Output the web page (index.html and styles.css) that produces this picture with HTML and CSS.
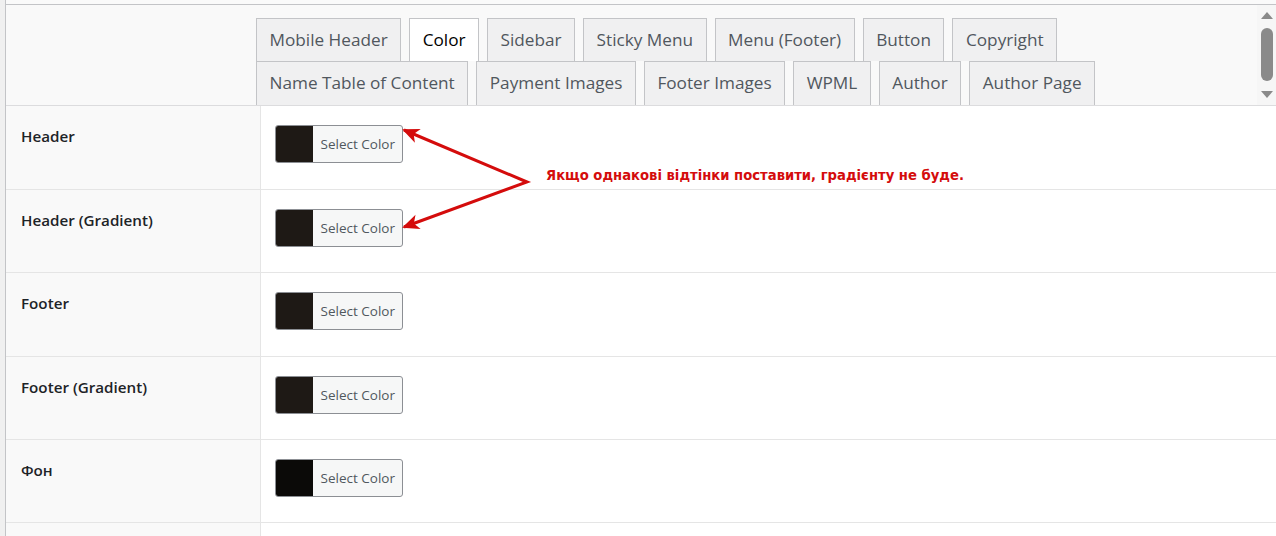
FILE: index.html
```html
<!DOCTYPE html>
<html lang="uk">
<head>
<meta charset="utf-8">
<title>Color settings</title>
<link rel="stylesheet" href="styles.css">
</head>
<body>
<div class="frame">
  <div class="tabs-area">
    <div class="tabs">
      <div class="tab-row">
        <a class="tab">Mobile Header</a>
        <a class="tab active">Color</a>
        <a class="tab">Sidebar</a>
        <a class="tab">Sticky Menu</a>
        <a class="tab">Menu (Footer)</a>
        <a class="tab">Button</a>
        <a class="tab">Copyright</a>
      </div>
      <div class="tab-row">
        <a class="tab">Name Table of Content</a>
        <a class="tab">Payment Images</a>
        <a class="tab">Footer Images</a>
        <a class="tab">WPML</a>
        <a class="tab">Author</a>
        <a class="tab">Author Page</a>
      </div>
    </div>
    <div class="scrollbar">
      <span class="sb-up"></span>
      <span class="sb-thumb"></span>
      <span class="sb-down"></span>
    </div>
  </div>

  <table class="form-table">
    <tr>
      <th>Header</th>
      <td><button class="color-btn"><span class="swatch swatch-brown"></span><span class="btn-label">Select Color</span></button></td>
    </tr>
    <tr>
      <th>Header (Gradient)</th>
      <td><button class="color-btn"><span class="swatch swatch-brown"></span><span class="btn-label">Select Color</span></button></td>
    </tr>
    <tr>
      <th>Footer</th>
      <td><button class="color-btn"><span class="swatch swatch-brown"></span><span class="btn-label">Select Color</span></button></td>
    </tr>
    <tr>
      <th>Footer (Gradient)</th>
      <td><button class="color-btn"><span class="swatch swatch-brown"></span><span class="btn-label">Select Color</span></button></td>
    </tr>
    <tr>
      <th>Фон</th>
      <td><button class="color-btn"><span class="swatch swatch-black"></span><span class="btn-label">Select Color</span></button></td>
    </tr>
    <tr class="last">
      <th></th>
      <td></td>
    </tr>
  </table>

  <svg class="annot" width="1270" height="536" viewBox="0 0 1270 536">
    <defs>
      <marker id="ah" markerUnits="userSpaceOnUse" markerWidth="40" markerHeight="40" refX="19" refY="20" orient="auto-start-reverse" viewBox="0 0 40 40">
        <path d="M21 20 L4 12.5 L8.5 20 L4 27.5 Z" fill="#d40c0c"/>
      </marker>
    </defs>
    <polyline points="398,130 521,182 398,227" fill="none" stroke="#d40c0c" stroke-width="3" stroke-linejoin="miter" marker-start="url(#ah)" marker-end="url(#ah)"/>
  </svg>
  <p class="note">Якщо однакові відтінки поставити, градієнту не буде.</p>
</div>
</body>
</html>
```

FILE: styles.css
```css
html, body {
  margin: 0;
  padding: 0;
}
body {
  background: #f0f0f0;
  font-family: "Open Sans", "Noto Sans", "Liberation Sans", sans-serif;
  width: 1276px;
  height: 536px;
  overflow: hidden;
}
.frame {
  position: relative;
  margin-left: 5px;
  border-left: 1px solid #c3c4c7;
  background: #fafafa;
  padding-top: 4px;
}
.tabs-area {
  display: flex;
  height: 100px;
  border-top: 1px solid #c3c4c7;
  border-bottom: 1px solid #dcdcde;
  background: #f9f9f9;
}
.tabs {
  flex: 1;
  padding: 13px 0 0 250px;
  display: flex;
  flex-direction: column;
}
.tab-row {
  display: flex;
  gap: 8px;
}
.tab {
  box-sizing: border-box;
  height: 43px;
  padding: 0 12.5px;
  border: 1px solid #c3c4c7;
  border-bottom: none;
  background: #f0f0f1;
  color: #50575e;
  font-size: 17.2px;
  line-height: 42px;
  white-space: nowrap;
}
.tab-row + .tab-row .tab {
  height: 44px;
}
.tab.active {
  background: #fff;
  color: #000;
}
.scrollbar {
  width: 19px;
  background: #f6f6f6;
  position: relative;
}
.sb-up, .sb-down {
  position: absolute;
  left: 4px;
  width: 0;
  height: 0;
  border-left: 6px solid transparent;
  border-right: 6px solid transparent;
}
.sb-up {
  top: 7px;
  border-bottom: 7px solid #8a8a8a;
}
.sb-down {
  top: 86px;
  border-top: 7px solid #8a8a8a;
}
.sb-thumb {
  position: absolute;
  left: 4px;
  top: 23px;
  width: 12px;
  height: 53px;
  border-radius: 6px;
  background: #8a8a8a;
}
.form-table {
  width: 100%;
  border-collapse: collapse;
  background: #fff;
}
.form-table tr {
  height: 83.4px;
  border-bottom: 1px solid #e5e5e5;
}
.form-table tr.last {
  height: 13px;
  border-bottom: none;
}
.form-table th {
  box-sizing: border-box;
  width: 254px;
  background: #f9f9f9;
  border-right: 1px solid #e5e5e5;
  text-align: left;
  vertical-align: top;
  padding: 20px 10px 0 15px;
  font-size: 15.2px;
  line-height: 20px;
  font-weight: 600;
  color: #1d2327;
}
.form-table td {
  vertical-align: top;
  padding: 19px 0 0 14px;
}
.color-btn {
  display: flex;
  box-sizing: border-box;
  width: 128px;
  height: 38px;
  padding: 0;
  border: 1px solid #8c8f94;
  border-radius: 3px;
  overflow: hidden;
  background: #f6f7f7;
  font-family: "Open Sans", "Noto Sans", sans-serif;
}
.swatch {
  width: 37px;
  height: 100%;
}
.swatch-brown {
  background: #1e1915;
}
.swatch-black {
  background: #0b0a08;
}
.btn-label {
  flex: 1;
  padding-left: 8px;
  text-align: left;
  font-size: 13.5px;
  line-height: 36px;
  color: #50575e;
  white-space: nowrap;
}
.annot {
  position: absolute;
  left: 0;
  top: 0;
  pointer-events: none;
}
.note {
  position: absolute;
  left: 540px;
  top: 167px;
  margin: 0;
  font-family: "DejaVu Sans", Verdana, sans-serif;
  font-weight: 700;
  font-size: 13.2px;
  line-height: 18px;
  color: #d40c0c;
  white-space: nowrap;
}
```
